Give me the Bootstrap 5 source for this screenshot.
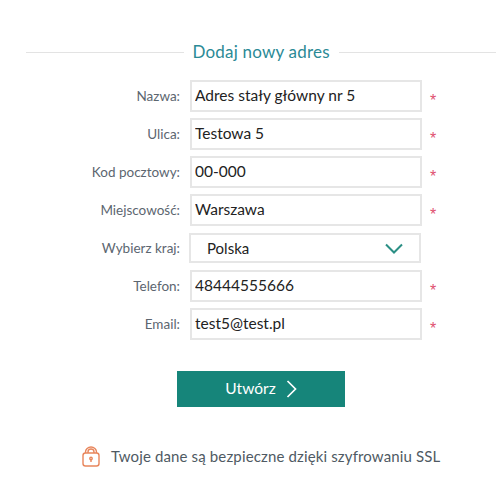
<!DOCTYPE html>
<html lang="pl"><head><meta charset="utf-8">
<link rel="stylesheet" href="https://cdn.jsdelivr.net/npm/bootstrap@5.3.0/dist/css/bootstrap.min.css">
<style>
html,body{background:#fff;font-family:Lato,"Noto Sans",sans-serif;overflow:hidden}
.sheet{width:502px;height:501px;padding:41px 6px 0 26px}
.headline{height:22px;gap:9px;margin-bottom:17px}
.headline hr{flex:1;margin:0;border:0;border-top:1px solid #e3e3e3;opacity:1;position:relative;top:0}
.headline h2{margin:0;font-size:17px;font-weight:400;color:#2b8a96;letter-spacing:.2px;line-height:22px;width:137px;white-space:nowrap}
.frow{height:32px;margin-bottom:6px}
.flabel{width:154px;margin:0;text-align:right;font-size:13.500px;color:#5c6670;line-height:30px}
.finput{width:232px;height:32px;margin-left:10px;border:2px solid #e6e6e6;border-radius:0;padding:0 3px 2px;font-size:15.500px;color:#222;font-family:inherit;box-shadow:none}
.req{color:#e0516f;font-size:16px;margin-left:8px;position:relative;top:5px;font-family:"Liberation Sans",sans-serif}
.fsel{width:232px;height:30px;margin-left:9px;border:2px solid #e6e6e6;padding:0 16px;font-size:15px;color:#222;line-height:26px}
.gobtn{width:168px;height:36px;margin:31px 0 0 151px;background:#16857a;color:#fff;border:0;border-radius:0;font-size:15.500px;font-weight:400;gap:10px}
.gobtn:hover{background:#16857a;color:#fff}
.secure{margin:38px 0 0 55px;gap:10px;font-size:15px;color:#4f5a63;letter-spacing:.14px}
</style></head><body>
<main class="sheet">
<div class="headline d-flex align-items-center"><hr><h2>Dodaj nowy adres</h2><hr></div>
<form>
<div class="frow d-flex align-items-center"><label class="flabel">Nazwa:</label><input class="finput form-control" value="Adres stały główny nr 5"><span class="req">*</span></div>
<div class="frow d-flex align-items-center"><label class="flabel">Ulica:</label><input class="finput form-control" value="Testowa 5"><span class="req">*</span></div>
<div class="frow d-flex align-items-center"><label class="flabel">Kod pocztowy:</label><input class="finput form-control" value="00-000"><span class="req">*</span></div>
<div class="frow d-flex align-items-center"><label class="flabel">Miejscowość:</label><input class="finput form-control" value="Warszawa"><span class="req">*</span></div>
<div class="frow d-flex align-items-center"><label class="flabel">Wybierz kraj:</label><div class="fsel d-flex align-items-center justify-content-between"><span>Polska</span><svg width="18" height="11" viewBox="0 0 18 11"><path d="M1 1.5 9 9.500 17 1.500" fill="none" stroke="#2b8f85" stroke-width="2"/></svg></div></div>
<div class="frow d-flex align-items-center"><label class="flabel">Telefon:</label><input class="finput form-control" value="48444555666"><span class="req">*</span></div>
<div class="frow d-flex align-items-center"><label class="flabel">Email:</label><input class="finput form-control" value="test5@test.pl"><span class="req">*</span></div>
<button type="button" class="gobtn btn d-flex align-items-center justify-content-center">Utwórz<svg width="11" height="18" viewBox="0 0 11 18"><path d="M1.500 1 9.500 9 1.500 17" fill="none" stroke="#fff" stroke-width="1.700"/></svg></button>
</form>
<div class="secure d-flex align-items-center"><svg width="20" height="21" viewBox="0 0 20 21" fill="none" stroke="#e8865c" stroke-width="1.400"><rect x="2" y="7" width="16" height="13" rx="2.500"/><path d="M4.500 7V6a5.500 5 0 0 1 11 0v1M7 7V6a3 3 0 0 1 6 0v1"/><circle cx="10" cy="12.500" r="1.200"/><path d="M10 13.500v2.500"/></svg><span>Twoje dane są bezpieczne dzięki szyfrowaniu SSL</span></div>
</main>
<script src="https://cdn.jsdelivr.net/npm/bootstrap@5.3.0/dist/js/bootstrap.bundle.min.js"></script>
</body></html>
